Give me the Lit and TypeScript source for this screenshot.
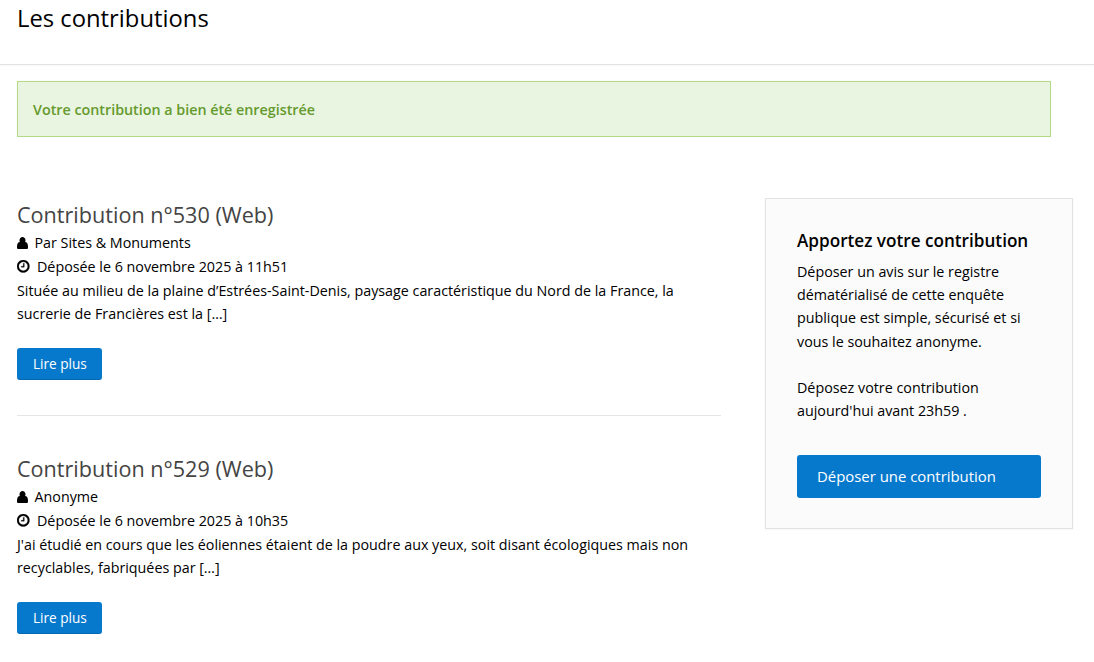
import { LitElement, html, css } from 'lit';
import { customElement } from 'lit/decorators.js';

const userIcon = html`<svg class="icon user" viewBox="0 256 1408 1408" preserveAspectRatio="none" aria-hidden="true"><path fill="currentColor" d="M1408 1405q0 120-73 189.500t-194 69.500h-874q-121 0-194-69.500t-73-189.500q0-53 3.500-103.500t14-109 26.500-108.500 43-97.500 62-81 85.500-53.500 111.500-20q9 0 42 21.500t74.500 48 108 48 133.500 21.500 133.500-21.500 108-48 74.500-48 42-21.500q61 0 111.500 20t85.500 53.500 62 81 43 97.500 26.500 108.500 14 109 3.500 103.500zM1088 640q0 159-112.500 271.500t-271.500 112.500-271.500-112.500-112.500-271.500 112.500-271.500 271.500-112.500 271.500 112.500 112.500 271.500z"/></svg>`;

const clockIcon = html`<svg class="icon clock" viewBox="0 128 1536 1536" aria-hidden="true"><path fill="currentColor" stroke="currentColor" stroke-width="30" d="M896 544v448q0 14-9 23t-23 9h-320q-14 0-23-9t-9-23v-64q0-14 9-23t23-9h224v-352q0-14 9-23t23-9h64q14 0 23 9t9 23zM1312 896q0-148-73-273t-198-198-273-73-273 73-198 198-73 273 73 273 198 198 273 73 273-73 198-198 73-273zM1536 896q0 209-103 385.500t-279.500 279.500-385.500 103-385.500-103-279.500-279.500-103-385.500 103-385.500 279.500-279.500 385.500-103 385.500 103 279.500 279.500 103 385.500z"/></svg>`;

const contributions = [
  {
    title: 'Contribution n°530 (Web)',
    author: 'Par Sites & Monuments',
    date: 'Déposée le 6 novembre 2025 à 11h51',
    text: 'Située au milieu de la plaine d’Estrées-Saint-Denis, paysage caractéristique du Nord de la France, la sucrerie de Francières est la […]',
  },
  {
    title: 'Contribution n°529 (Web)',
    author: 'Anonyme',
    date: 'Déposée le 6 novembre 2025 à 10h35',
    text: "J'ai étudié en cours que les éoliennes étaient de la poudre aux yeux, soit disant écologiques mais non recyclables, fabriquées par […]",
  },
];

@customElement('app-root')
export class AppRoot extends LitElement {
  static styles = css`
    :host {
      display: block;
      height: 662px;
      overflow: hidden;
      background: #fff;
      color: #000;
      font-family: 'Open Sans', sans-serif;
      font-size: 14.3px;
      line-height: 23.8px;
    }
    .page-header {
      height: 65px;
      box-sizing: border-box;
      padding: 0 17px;
      border-bottom: 1px solid #e2e2e2;
      box-shadow: 0 1px 2px rgba(0, 0, 0, 0.04);
    }
    h1 {
      margin: 0;
      font-size: 23.8px;
      font-weight: 400;
      line-height: 37px;
    }
    .alert {
      width: 1034px;
      height: 56px;
      box-sizing: border-box;
      margin: 16px 0 0 17px;
      padding: 2px 15px 0;
      display: flex;
      align-items: center;
      background: #e9f5e0;
      border: 1px solid #b2db85;
      color: #659a2e;
      font-weight: 600;
    }
    .columns {
      display: flex;
      align-items: flex-start;
      margin: 61px 0 0 17px;
    }
    .list {
      width: 704px;
      margin-right: 44px;
    }
    .contribution {
      height: 217px;
      border-bottom: 1px solid #e5e5e5;
      margin-bottom: 36px;
    }
    .contribution:last-child {
      border-bottom: 0;
    }
    h2 {
      margin: 0 0 3px;
      padding-top: 3px;
      font-size: 21.6px;
      font-weight: 400;
      line-height: 27px;
      color: #444;
    }
    .meta {
      display: flex;
      align-items: center;
    }
    .icon {
      flex: none;
      color: #000;
    }
    .user {
      width: 11px;
      height: 12.5px;
      margin-right: 6.5px;
    }
    .clock {
      width: 12.5px;
      height: 12.5px;
      margin-right: 7.5px;
    }
    .text {
      margin: 0;
      line-height: 23.4px;
    }
    .more {
      display: inline-block;
      margin-top: 23px;
      padding: 0 15px 0 16px;
      height: 32px;
      line-height: 32px;
      font-size: 13.6px;
      white-space: nowrap;
      color: #fff;
      background: #0779cd;
      border-bottom: 1px solid #0668b0;
      box-sizing: border-box;
      border-radius: 3px;
      text-decoration: none;
    }
    aside {
      width: 308px;
      height: 331px;
      box-sizing: border-box;
      padding: 30px 31px;
      background: #fbfbfb;
      border: 1px solid #e2e2e2;
      box-shadow: 0 1px 2px rgba(0, 0, 0, 0.04);
    }
    h3 {
      margin: 0;
      font-size: 17.15px;
      font-weight: 600;
      line-height: 24px;
    }
    aside p {
      margin: 7px 0 0;
      line-height: 23.2px;
    }
    aside p + p {
      margin-top: 23.2px;
    }
    .submit {
      display: block;
      margin-top: 33px;
      height: 43px;
      padding: 0 20px;
      line-height: 43px;
      font-size: 14.9px;
      color: #fff;
      background: #0779cd;
      border-radius: 3px;
      text-decoration: none;
    }
  `;

  render() {
    return html`
      <header class="page-header"><h1>Les contributions</h1></header>
      <div class="alert">Votre contribution a bien été enregistrée</div>
      <div class="columns">
        <main class="list">
          ${contributions.map(
            (c) => html`
              <article class="contribution">
                <h2>${c.title}</h2>
                <div class="meta">${userIcon}${c.author}</div>
                <div class="meta">${clockIcon}${c.date}</div>
                <p class="text">${c.text}</p>
                <a class="more" href="#">Lire plus</a>
              </article>
            `
          )}
        </main>
        <aside>
          <h3>Apportez votre contribution</h3>
          <p>Déposer un avis sur le registre dématérialisé de cette enquête publique est simple, sécurisé et si vous le souhaitez anonyme.</p>
          <p>Déposez votre contribution aujourd'hui avant 23h59 .</p>
          <a class="submit" href="#">Déposer une contribution</a>
        </aside>
      </div>
    `;
  }
}
